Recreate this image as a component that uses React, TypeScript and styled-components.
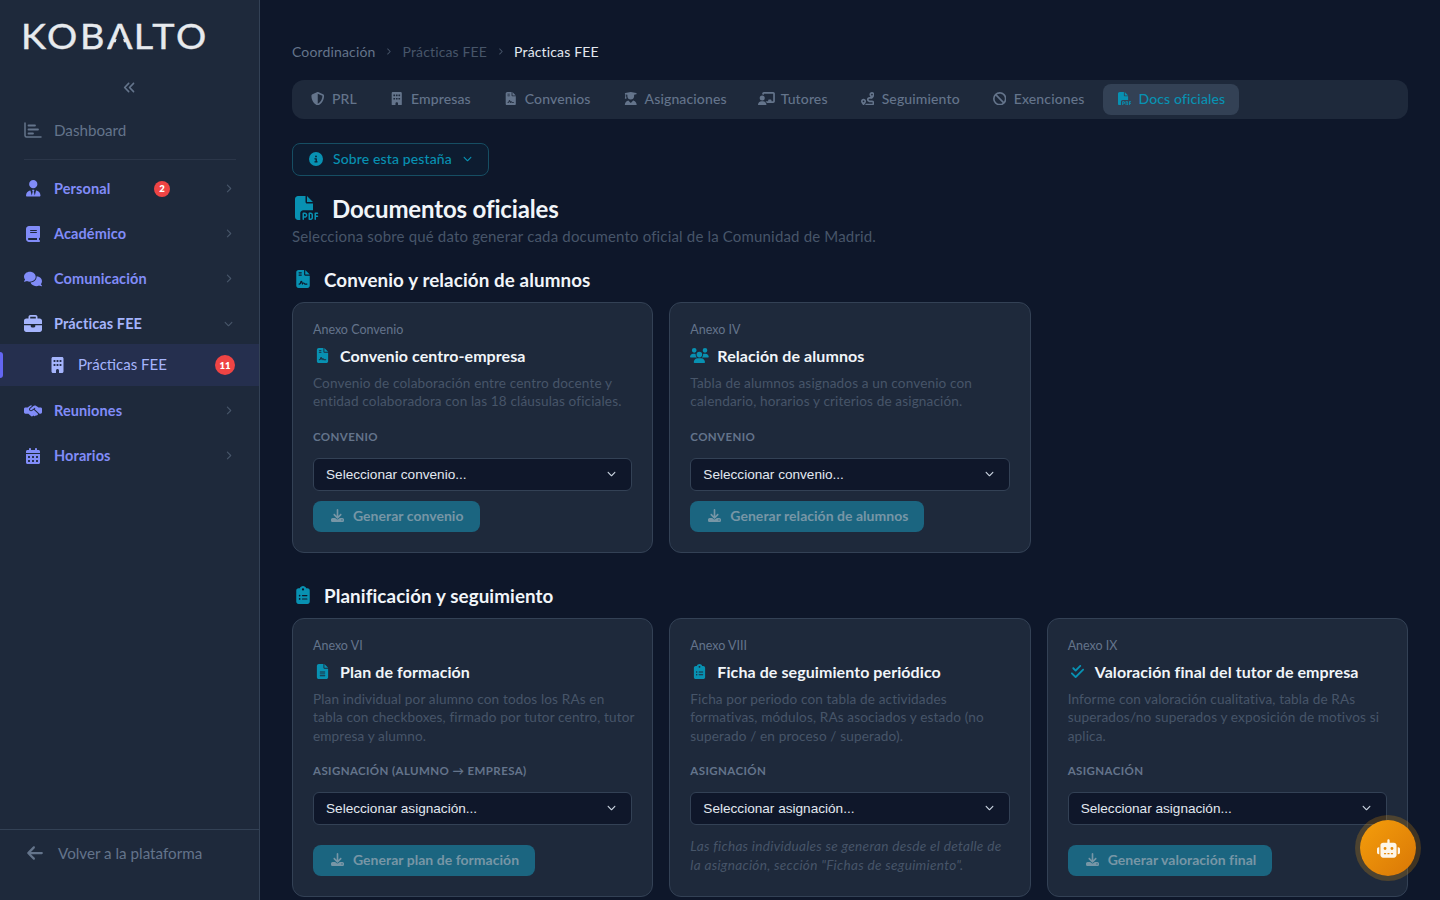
import React from 'react';
import styled, { createGlobalStyle } from 'styled-components';
import {
  FaUserTie, FaBook, FaComments, FaBriefcase, FaBuilding, FaHandshakeSimple, FaCalendarDays, FaChevronRight, FaChevronDown,
  FaAnglesLeft, FaArrowLeft, FaShieldHalved, FaFileContract, FaUserGraduate, FaChalkboardUser, FaRoute, FaBan, FaFilePdf,
  FaCircleInfo, FaUsers, FaClipboardList, FaFileLines, FaCheckDouble, FaDownload, FaRobot,
} from 'react-icons/fa6';
import { IconType } from 'react-icons';

const Global = createGlobalStyle`
  html, body { margin: 0; height: 100%; background: #0f172a; overflow: hidden; }
  #root { height: 100%; }
  * { box-sizing: border-box; }
  body { font-family: Lato, "Open Sans", sans-serif; }
`;

const Shell = styled.div`display: flex; height: 900px; overflow: hidden; background: #0e172a;`;

const Sidebar = styled.aside`
  width: 260px; flex: none; height: 100%; background: #1e293b; border-right: 1px solid #334155;
  display: flex; flex-direction: column;
`;
const Logo = styled.div`
  height: 70px; padding: 14px 0 0 21px; font-size: 34px; line-height: 43px; font-weight: 400; color: #e7eaee; white-space: nowrap;
`;
const LogoText = styled.span`
  display: inline-block; letter-spacing: 2.4px; -webkit-text-stroke: 0.4px #e7eaee; transform: scaleX(1.11); transform-origin: left center;
`;
const LogoA = styled.span`
  display: inline-block; letter-spacing: 1px;
  clip-path: polygon(0 0, 100% 0, 100% 100%, 80% 100%, 48% 32%, 17% 100%, 0 100%);
`;
const Collapse = styled.div`height: 34px; display: flex; align-items: center; justify-content: center; color: #64748b; font-size: 13px;`;
const DashRow = styled.div`
  height: 45px; margin: 3px 0 0; padding: 0 24px; display: flex; align-items: center; color: #64748b; font-size: 15.2px;
`;
const DashIcon = styled.svg`width: 18px; height: 16px; margin-right: 12px; flex: none;`;
const Divider = styled.div`height: 1px; margin: 7px 23px 6px 24px; background: #2b3649;`;
const Group = styled.div`
  height: 45px; padding: 0 24px; display: flex; align-items: center; color: ${p => (p.$open ? '#a5b4fc' : '#818cf8')};
  font-size: 14.5px; font-weight: 700; letter-spacing: 0.1px;
`;
const GroupIconBox = styled.span`
  width: 18px; margin-right: 12px; flex: none; display: flex; justify-content: center; font-size: ${p => p.$size}px;
  svg { flex: none; }
`;
const GroupLabel = styled.span`width: 100px; flex: none;`;
const Badge = styled.span`
  flex: none; width: ${p => p.$size}px; height: ${p => p.$size}px; border-radius: 50%; background: #ef4444; color: #fff;
  font-size: 9.5px; font-weight: 800; display: flex; align-items: center; justify-content: center;
`;
const Chev = styled.span`margin-left: auto; color: #475569; font-size: 9px; display: flex; padding-right: 2px;`;
const Sub = styled.div`
  position: relative; height: 42px; margin-top: -2px; margin-bottom: 2px; padding: 0 24px 0 51px; display: flex; align-items: center; background: #252f4e;
  color: #a5b4fc; font-size: 15px;
  &::before { content: ''; position: absolute; left: 0; top: 8px; bottom: 8px; width: 3px; border-radius: 0 3px 3px 0; background: #6366f1; }
`;
const SubIcon = styled.span`width: 13px; margin-right: 14px; display: flex; font-size: 16px; justify-content: center;`;
const SubLabel = styled.span`flex: 1; padding-bottom: 2px;`;
const Back = styled.div`
  margin-top: auto; height: 71px; padding: 0 26px 24px; border-top: 1px solid #334155; display: flex; align-items: center; color: #64748b; font-size: 15.2px;
  svg { font-size: 18px; margin-right: 14px; }
`;

const Main = styled.main`flex: 1; min-width: 0; padding: 43px 32px 0;`;
const Crumbs = styled.div`display: flex; align-items: center; height: 18px; padding-bottom: 2px; font-size: 14px; letter-spacing: 0.15px; color: #64748b;`;
const Crumb = styled.span`color: ${p => (p.$on ? '#e2e8f0' : p.$dim ? '#475569' : '#64748b')};`;
const CrumbSep = styled.span`display: flex; margin: 0 10px; font-size: 7px; color: #475569;`;
const Tabs = styled.nav`
  margin-top: 19px; height: 39px; background: #1e293b; border-radius: 12px; padding: 4px; display: flex; gap: 4px;
`;
const Tab = styled.div`
  height: 31px; padding: 0 14px 2px; border-radius: 8px; display: flex; align-items: center; gap: 6px; font-size: 14px; letter-spacing: 0.13px; font-weight: 500;
  color: ${p => (p.$on ? '#0891b2' : '#64748b')}; background: ${p => (p.$on ? '#334155' : 'transparent')};
`;
const TabIcon = styled.span`
  width: 16px; flex: none; display: flex; justify-content: center; font-size: 13.5px;
  svg { flex: none; width: ${p => (p.$wide ? '1.25em' : '1em')}; height: 1em; }
`;
const About = styled.div`
  margin-top: 24px; display: inline-flex; align-items: center; height: 33px; padding: 0 16px 2px; gap: 10px; border: 1px solid #164e63; border-radius: 8px;
  background: rgba(8, 145, 178, 0.05); color: #0891b2; font-size: 14px; letter-spacing: 0.13px; font-weight: 500;
`;
const AboutChev = styled.span`display: flex; font-size: 9px; margin-left: 1px;`;
const TitleRow = styled.div`margin-top: 15px; height: 34px; display: flex; align-items: center; color: #f1f5f9;`;
const TitleIcon = styled.span`width: 40px; flex: none; display: flex; padding-left: 3px; color: #0891b2; font-size: 24px;`;
const H1 = styled.h1`margin: 0; font-size: 24px; letter-spacing: -0.15px; font-weight: 700; color: #f1f5f9;`;
const Lead = styled.p`margin: 1px 0 0; font-size: 15px; letter-spacing: 0.17px; line-height: 20px; color: #475569;`;
const SecRow = styled.div`
  display: flex; align-items: center; height: 24px; padding-bottom: 2px; margin-top: ${p => p.$top}px;
`;
const SecIcon = styled.span`width: 32px; flex: none; display: flex; padding-left: 2px; color: #0891b2; font-size: 18px;`;
const H2 = styled.h2`margin: 0; font-size: 18.8px; letter-spacing: 0.1px; font-weight: 700; color: #f1f5f9;`;
const Grid = styled.div`margin-top: 10px; display: grid; grid-template-columns: repeat(3, minmax(0, 1fr)); gap: 16px;`;
const Card = styled.section`
  background: #1e293b; border: 1px solid #334155; border-radius: 12px; padding: 20px; display: flex; flex-direction: column; height: ${p => p.$h}px;
  & > * { flex: none; }
`;
const Eyebrow = styled.div`font-size: 12.5px; line-height: 14px; color: #64748b;`;
const CardTitle = styled.div`margin-top: 7px; height: 24px; padding-bottom: 2px; display: flex; align-items: center; font-size: 16px; letter-spacing: 0.08px; font-weight: 700; color: #f1f5f9;`;
const CardIcon = styled.span`
  width: 19px; margin-right: 8px; flex: none; display: flex; justify-content: center; color: #0891b2; font-size: 15px;
  svg { flex: none; width: ${p => (p.$wide ? '1.25em' : '1em')}; height: 1em; }
`;
const Desc = styled.p`margin: 6px 0 0; font-size: 13.6px; letter-spacing: 0.13px; line-height: 18.4px; color: #475569; white-space: pre;`;
const FieldLabel = styled.div`margin-top: 19px; font-size: 11.5px; line-height: 14px; font-weight: 700; letter-spacing: 0.4px; color: #64748b; text-transform: uppercase;`;
const SelectWrap = styled.div`position: relative; margin-top: 14px; height: 33px;`;
const Select = styled.select`
  width: 100%; height: 33px; appearance: none; background: #0f172a; color: #e2e8f0; border: 1px solid #334155; border-radius: 6px; padding: 0 12px;
  font-family: "Liberation Sans", Arial, sans-serif; font-size: 13.6px;
`;
const SelectChev = styled.span`position: absolute; right: 16px; top: 11px; display: flex; color: #cbd5e1; font-size: 9px; pointer-events: none;`;
const Gen = styled.button`
  margin-top: ${p => p.$top}px; align-self: flex-start; height: 31px; padding: 0 16px 2px 18px; border: none; border-radius: 8px; background: #1b6580; color: #7796a6;
  display: inline-flex; align-items: center; gap: 9px; font-family: inherit; font-size: 14px; letter-spacing: 0.03px; font-weight: 700;
  svg { font-size: 13px; }
`;
const Note = styled.p`margin: 12px 0 0; font-size: 13.6px; letter-spacing: 0.3px; line-height: 18.4px; font-style: italic; color: #475569; white-space: pre;`;
const Fab = styled.div`
  position: absolute; left: 1360px; top: 820px; width: 56px; height: 56px; border-radius: 50%;
  background: linear-gradient(135deg, #f59e0b, #d97706); box-shadow: 0 0 0 5px rgba(245, 158, 11, 0.22);
  display: flex; align-items: center; justify-content: center; color: #fdf6e9; font-size: 23px;
`;

type G = { label: string; icon: IconType; size: number; badge?: string; open?: boolean };
const groups1: G[] = [
  { label: 'Personal', icon: FaUserTie, size: 16.5, badge: '2' },
  { label: 'Académico', icon: FaBook, size: 16 },
  { label: 'Comunicación', icon: FaComments, size: 18 },
  { label: 'Prácticas FEE', icon: FaBriefcase, size: 18, open: true },
];
const groups2: G[] = [
  { label: 'Reuniones', icon: FaHandshakeSimple, size: 18 },
  { label: 'Horarios', icon: FaCalendarDays, size: 16 },
];
const tabs: { label: string; icon: IconType; on?: boolean; wide?: boolean }[] = [
  { label: 'PRL', icon: FaShieldHalved },
  { label: 'Empresas', icon: FaBuilding },
  { label: 'Convenios', icon: FaFileContract },
  { label: 'Asignaciones', icon: FaUserGraduate },
  { label: 'Tutores', icon: FaChalkboardUser, wide: true },
  { label: 'Seguimiento', icon: FaRoute },
  { label: 'Exenciones', icon: FaBan },
  { label: 'Docs oficiales', icon: FaFilePdf, on: true },
];
type C = { eyebrow: string; title: string; icon: IconType; wide?: boolean; desc: string; label: string; select: string; btn?: string; top?: number; note?: string };
const row1: C[] = [
  { eyebrow: 'Anexo Convenio', title: 'Convenio centro-empresa', icon: FaFileContract, desc: 'Convenio de colaboración entre centro docente y\nentidad colaboradora con las 18 cláusulas oficiales.', label: 'Convenio', select: 'Seleccionar convenio...', btn: 'Generar convenio', top: 10 },
  { eyebrow: 'Anexo IV', title: 'Relación de alumnos', icon: FaUsers, wide: true, desc: 'Tabla de alumnos asignados a un convenio con\ncalendario, horarios y criterios de asignación.', label: 'Convenio', select: 'Seleccionar convenio...', btn: 'Generar relación de alumnos', top: 10 },
];
const row2: C[] = [
  { eyebrow: 'Anexo VI', title: 'Plan de formación', icon: FaFileLines, desc: 'Plan individual por alumno con todos los RAs en\ntabla con checkboxes, firmado por tutor centro, tutor\nempresa y alumno.', label: 'Asignación (alumno → empresa)', select: 'Seleccionar asignación...', btn: 'Generar plan de formación', top: 20 },
  { eyebrow: 'Anexo VIII', title: 'Ficha de seguimiento periódico', icon: FaClipboardList, desc: 'Ficha por periodo con tabla de actividades\nformativas, módulos, RAs asociados y estado (no\nsuperado / en proceso / superado).', label: 'Asignación', select: 'Seleccionar asignación...', note: 'Las fichas individuales se generan desde el detalle de\nla asignación, sección "Fichas de seguimiento".' },
  { eyebrow: 'Anexo IX', title: 'Valoración final del tutor de empresa', icon: FaCheckDouble, desc: 'Informe con valoración cualitativa, tabla de RAs\nsuperados/no superados y exposición de motivos si\naplica.', label: 'Asignación', select: 'Seleccionar asignación...', btn: 'Generar valoración final', top: 20 },
];

function NavGroup({ g }: { g: G }) {
  const I = g.icon;
  return (
    <Group $open={g.open}>
      <GroupIconBox $size={g.size}><I /></GroupIconBox>
      <GroupLabel>{g.label}</GroupLabel>
      {g.badge && <Badge $size={16}>{g.badge}</Badge>}
      <Chev>{g.open ? <FaChevronDown /> : <FaChevronRight />}</Chev>
    </Group>
  );
}

function DocCard({ c, h }: { c: C; h: number }) {
  const I = c.icon;
  return (
    <Card $h={h}>
      <Eyebrow>{c.eyebrow}</Eyebrow>
      <CardTitle><CardIcon $wide={c.wide}><I /></CardIcon>{c.title}</CardTitle>
      <Desc>{c.desc}</Desc>
      <FieldLabel>{c.label}</FieldLabel>
      <SelectWrap>
        <Select defaultValue=""><option value="">{c.select}</option></Select>
        <SelectChev><FaChevronDown /></SelectChev>
      </SelectWrap>
      {c.btn && <Gen $top={c.top} disabled><FaDownload />{c.btn}</Gen>}
      {c.note && <Note>{c.note}</Note>}
    </Card>
  );
}

export default function App() {
  return (
    <Shell>
      <Global />
      <Sidebar>
        <Logo><LogoText>KOB<LogoA>A</LogoA>LTO</LogoText></Logo>
        <Collapse><FaAnglesLeft /></Collapse>
        <DashRow>
          <DashIcon viewBox="0 0 18 16" fill="none" stroke="currentColor" strokeWidth="1.5" strokeLinecap="round">
            <path d="M1 1v12.5a1.5 1.5 0 0 0 1.5 1.5H17" />
            <path d="M4.5 3.5H11M4.5 7.5H14M4.5 11.5H9" strokeWidth="1.8" />
          </DashIcon>
          Dashboard
        </DashRow>
        <Divider />
        {groups1.map(g => <NavGroup key={g.label} g={g} />)}
        <Sub>
          <SubIcon><FaBuilding /></SubIcon>
          <SubLabel>Prácticas FEE</SubLabel>
          <Badge $size={20}>11</Badge>
        </Sub>
        {groups2.map(g => <NavGroup key={g.label} g={g} />)}
        <Back><FaArrowLeft />Volver a la plataforma</Back>
      </Sidebar>
      <Main>
        <Crumbs>
          <Crumb>Coordinación</Crumb>
          <CrumbSep><FaChevronRight /></CrumbSep>
          <Crumb $dim>Prácticas FEE</Crumb>
          <CrumbSep><FaChevronRight /></CrumbSep>
          <Crumb $on>Prácticas FEE</Crumb>
        </Crumbs>
        <Tabs>
          {tabs.map(t => {
            const I = t.icon;
            return <Tab key={t.label} $on={t.on}><TabIcon $wide={t.wide}><I /></TabIcon>{t.label}</Tab>;
          })}
        </Tabs>
        <About>
          <FaCircleInfo />
          Sobre esta pestaña
          <AboutChev><FaChevronDown /></AboutChev>
        </About>
        <TitleRow>
          <TitleIcon><FaFilePdf /></TitleIcon>
          <H1>Documentos oficiales</H1>
        </TitleRow>
        <Lead>Selecciona sobre qué dato generar cada documento oficial de la Comunidad de Madrid.</Lead>
        <SecRow $top={22}>
          <SecIcon><FaFileContract /></SecIcon>
          <H2>Convenio y relación de alumnos</H2>
        </SecRow>
        <Grid>{row1.map(c => <DocCard key={c.title} c={c} h={251} />)}</Grid>
        <SecRow $top={31}>
          <SecIcon><FaClipboardList /></SecIcon>
          <H2>Planificación y seguimiento</H2>
        </SecRow>
        <Grid>{row2.map(c => <DocCard key={c.title} c={c} h={279} />)}</Grid>
      </Main>
      <Fab><FaRobot /></Fab>
    </Shell>
  );
}
